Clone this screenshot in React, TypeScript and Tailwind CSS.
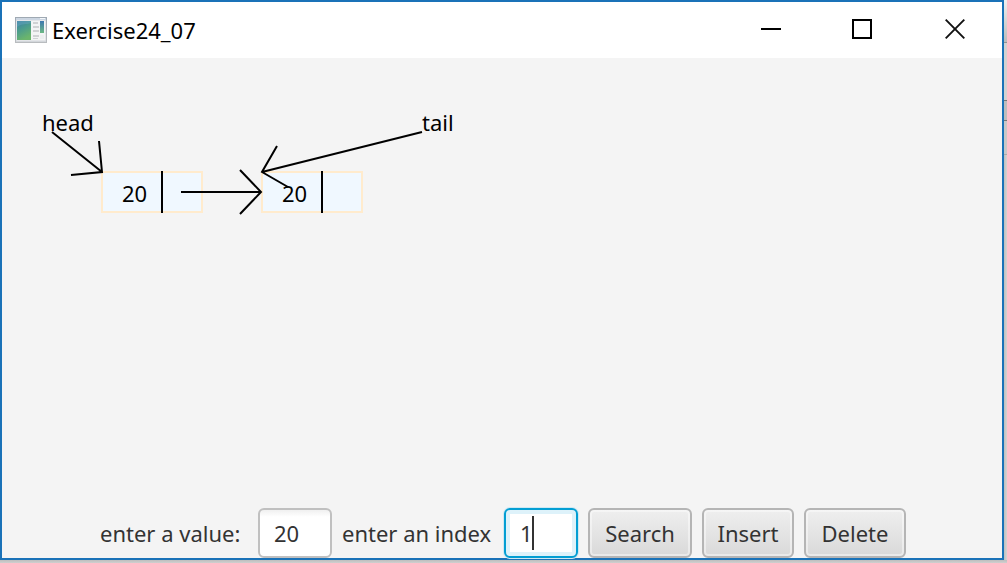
import React, { useState } from "react";

type ListNode = { value: number; x: number; y: number };

const nodes: ListNode[] = [
  { value: 20, x: 99, y: 113 },
  { value: 20, x: 259, y: 113 },
];

function AppIcon() {
  return (
    <svg width="32" height="26" viewBox="0 0 32 26" aria-hidden="true">
      <defs>
        <linearGradient id="pane" x1="0" y1="0" x2="0.4" y2="1">
          <stop offset="0" stopColor="#3c7fa6" />
          <stop offset="0.5" stopColor="#4c9d8c" />
          <stop offset="1" stopColor="#6bb56c" />
        </linearGradient>
        <linearGradient id="strip" x1="0" y1="0" x2="0" y2="1">
          <stop offset="0" stopColor="#3d78b0" />
          <stop offset="1" stopColor="#6cb884" />
        </linearGradient>
        <linearGradient id="frame" x1="0" y1="0" x2="0" y2="1">
          <stop offset="0" stopColor="#9fa9b3" />
          <stop offset="1" stopColor="#b9bcbf" />
        </linearGradient>
      </defs>
      <rect x="0.5" y="0.5" width="31" height="25" fill="#d3d7db" stroke="url(#frame)" />
      <rect x="1" y="1" width="30" height="2" fill="#ccd6e2" />
      <rect x="25" y="1" width="5" height="1" fill="#f4f7fa" />
      <rect x="1.500" y="3.500" width="29" height="20" fill="#f3f4f5" />
      <rect x="2" y="4" width="14" height="19" fill="url(#pane)" />
      <path d="M2 10C7 6 11 8 16 6V4H2Z" fill="#72aecb" opacity="0.35" />
      <path d="M18 5h5v2h-5zM18 9h6v2h-6zM18 13h6v2h-6zM18 18h6v2h-6zM18 21h5v1h-5z" fill="#d0d2d4" />
      <rect x="25" y="4" width="4" height="12" fill="url(#strip)" />
      <rect x="25" y="18" width="4" height="4" fill="#eceeef" />
    </svg>
  );
}

const windowButtonClass = "flex h-14 items-center justify-center pb-0.5";

function TitleBar() {
  return (
    <header className="flex h-14 shrink-0 items-center bg-white pl-[13px]">
      <AppIcon />
      <h1 className="ml-[5px] flex-1 text-[22px] leading-8 text-black">Exercise24_07</h1>
      <button type="button" aria-label="Minimize" className={windowButtonClass + " w-[90px]"}>
        <svg width="20" height="20" viewBox="0 0 20 20" aria-hidden="true">
          <path d="M0 10h20" stroke="#000" strokeWidth="2" />
        </svg>
      </button>
      <button type="button" aria-label="Maximize" className={windowButtonClass + " w-[92px]"}>
        <svg width="20" height="20" viewBox="0 0 20 20" aria-hidden="true">
          <path d="M1 1h18v18H1z" fill="none" stroke="#000" strokeWidth="2" />
        </svg>
      </button>
      <button type="button" aria-label="Close" className={windowButtonClass + " w-[94px]"}>
        <svg width="20" height="20" viewBox="0 0 20 20" aria-hidden="true">
          <path d="M0.700 0.700 19.300 19.300M19.300 0.700 0.700 19.300" stroke="#111" strokeWidth="1.900" />
        </svg>
      </button>
    </header>
  );
}

function ListView() {
  return (
    <main className="relative flex-1 text-[22px] leading-8 text-black">
      {nodes.map((n) => (
        <div
          key={n.x}
          className="absolute flex h-[42px] w-[102px] border-2 border-[#ffebcd] bg-[#f0f8ff]"
          style={{ left: n.x, top: n.y }}
        >
          <span className="-my-0.5 w-[60px] border-r-2 border-black pt-1.5 pl-[19px]">{n.value}</span>
        </div>
      ))}
      <svg
        className="absolute top-0 left-0"
        width="480"
        height="180"
        fill="none"
        stroke="#000"
        strokeWidth="2"
        aria-hidden="true"
      >
        <path d="M50 74 100 114M97 83 100 114 69 117" />
        <path d="M420 74 260 114M275 88 260 114 286 129" />
        <path d="M179 134H259M238 112 259 134 238 156" />
      </svg>
      <span className="absolute top-12 left-10">head</span>
      <span className="absolute top-12 left-[420px]">tail</span>
    </main>
  );
}

const buttonClass =
  "h-[50px] rounded-md border-2 border-[#b5b5b5] bg-linear-to-b from-[#efefef] to-[#d9d9d9] text-center inset-shadow-[0_0_0_2px_#ffffff70]";

function Controls() {
  const [value, setValue] = useState("20");
  const [index, setIndex] = useState("1");
  return (
    <form
      className="flex shrink-0 items-center justify-center gap-2.5 pl-0.5 text-[22px] leading-8 text-[#333]"
      onSubmit={(e) => e.preventDefault()}
    >
      <label htmlFor="value" className="w-[148px] whitespace-nowrap">
        enter a value:
      </label>
      <input
        id="value"
        value={value}
        onChange={(e) => setValue(e.target.value)}
        className="h-[50px] w-[74px] rounded-md border-2 border-[#c0c0c0] bg-white bg-linear-to-b from-[#f0f0f0] to-white to-15% px-3.5 outline-none"
      />
      <label htmlFor="index" className="w-[152px] whitespace-nowrap">
        enter an index
      </label>
      <div className="relative">
        <input
          id="index"
          value={index}
          onChange={(e) => setIndex(e.target.value)}
          className="block h-[50px] w-[74px] rounded-md border-2 border-[#039ed3] bg-white px-3.5 caret-transparent shadow-[0_0_0_1px_#cfe8f2] inset-shadow-[0_0_0_4px_#def2fa] outline-none"
        />
        <span className="absolute top-2 left-7 h-[34px] w-0.5 bg-[#333]" aria-hidden="true" />
      </div>
      <button type="button" className={buttonClass + " w-[104px]"}>Search</button>
      <button type="button" className={buttonClass + " w-[92px]"}>Insert</button>
      <button type="button" className={buttonClass + " w-[102px]"}>Delete</button>
    </form>
  );
}

function BackdropEdge() {
  return (
    <div className="flex w-[3px] shrink-0 flex-col bg-[#c6c6c6]" aria-hidden="true">
      <div className="h-[43px] border-b border-[#929292] bg-linear-to-b from-[#f0f0f0] to-[#bcbcbc]" />
      <div className="h-[58px] border-b border-[#777] bg-[#d2d2d2]" />
      <div className="h-5 border-b border-[#777] bg-[#bebebe]" />
      <div className="h-[34px] border-b border-[#aaa] bg-[#c8c8c8]" />
      <div className="flex-1 bg-linear-to-r from-[#bfbfbf] to-[#d4d4d4]" />
    </div>
  );
}

export default function App() {
  return (
    <div className="flex h-screen flex-col overflow-hidden bg-linear-to-b from-[#bdbdbd] to-[#cfcfcf] font-['Noto_Sans','Open_Sans',sans-serif]">
      <div className="flex min-h-0 flex-1">
        <div className="flex min-w-0 flex-1 flex-col border-2 border-[#1a72b8] bg-[#f4f4f4]">
          <TitleBar />
          <ListView />
          <Controls />
        </div>
        <BackdropEdge />
      </div>
      <div className="h-[3px] shrink-0 bg-linear-to-b from-[#bdbdbd] to-[#d0d0d0]" />
    </div>
  );
}
